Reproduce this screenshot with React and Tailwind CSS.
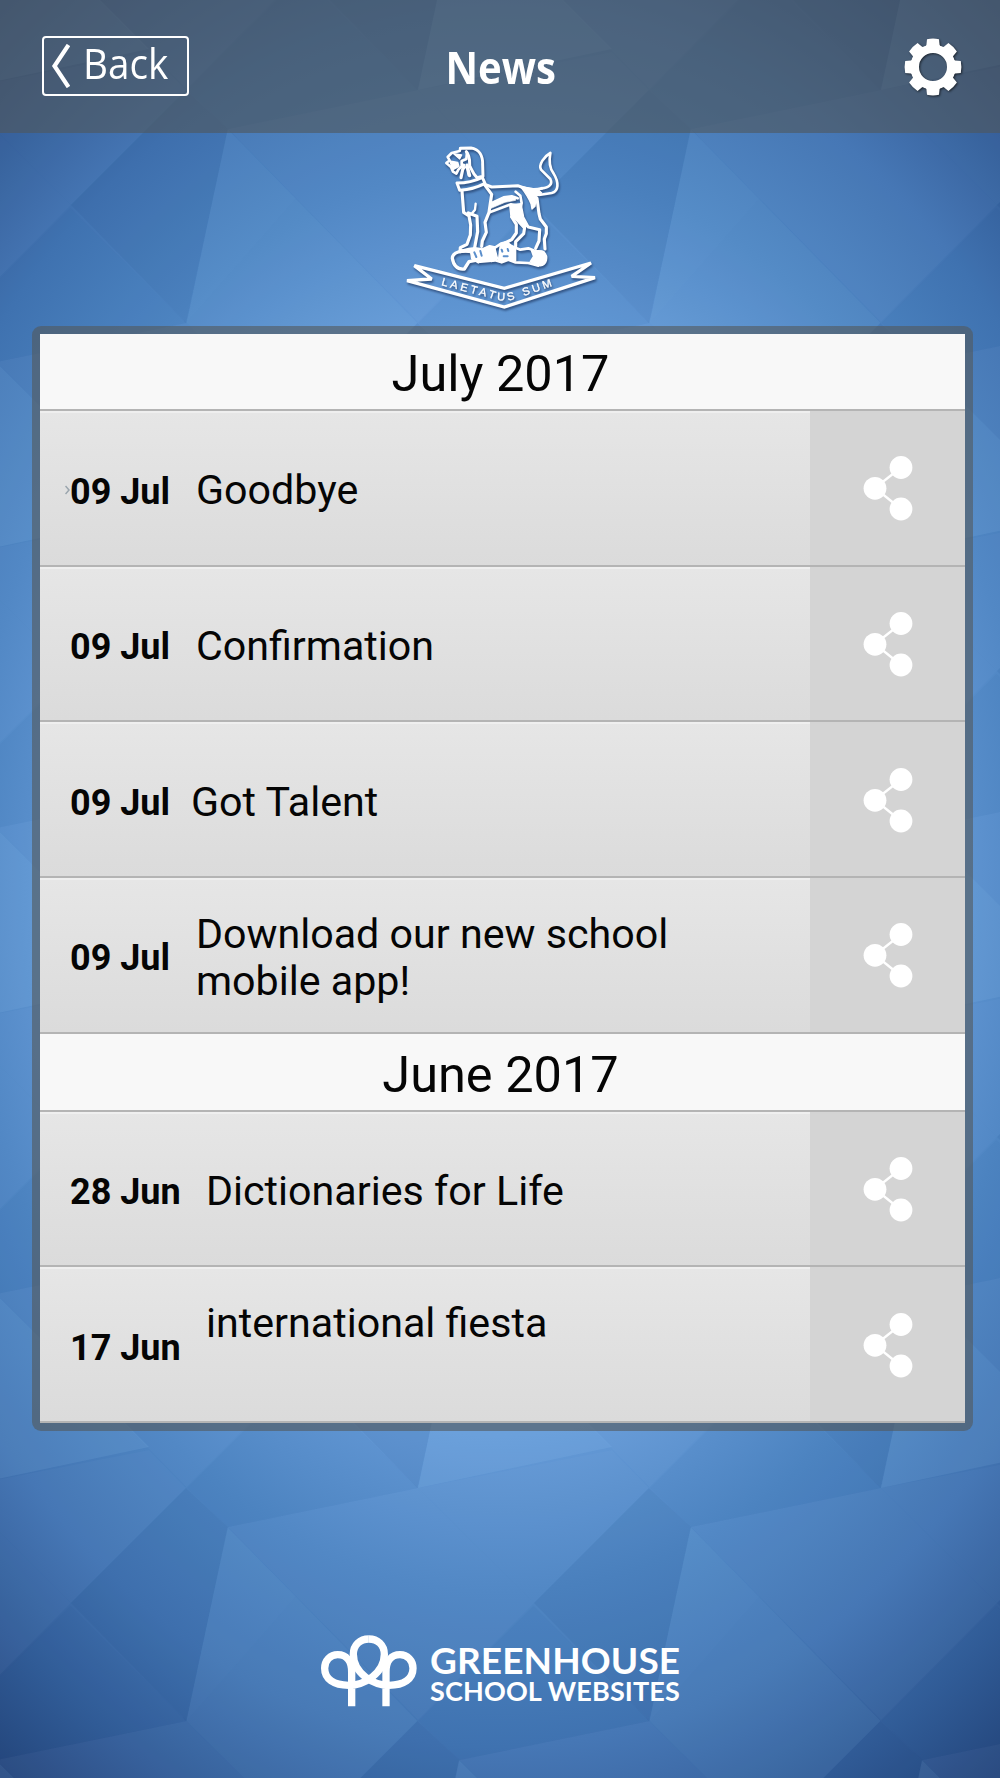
const months = [
  {
    name: 'July 2017',
    items: [
      { date: '09 Jul', title: 'Goodbye', marker: true },
      { date: '09 Jul', title: 'Confirmation' },
      { date: '09 Jul', title: 'Got Talent', indent: 'pl-[151px]' },
      { date: '09 Jul', title: 'Download our new school mobile app!' },
    ],
  },
  {
    name: 'June 2017',
    items: [
      { date: '28 Jun', title: 'Dictionaries for Life', indent: 'pl-[166px]' },
      { date: '17 Jun', title: 'international fiesta', indent: 'pl-[166px] pb-[47px]' },
    ],
  },
]

const light = '#a8d8ff'
const dark = '#0a3a70'

// facets around one lattice point, repeated over the whole background
const shared = [
  { points: '0,0 -190,39 0,232 116,115', fill: light, opacity: 0.04 },
  { points: '116,115 231,0 273,39 231,233', fill: dark, opacity: 0.07 },
  { points: '0,0 -190,39 -231,0 -116,-115', fill: dark, opacity: 0.03 },
]
const evenFacets = [
  ...shared,
  { points: '0,0 41,-194 194,-41', fill: light, opacity: 0.1 },
  { points: '0,0 194,-38 231,0 116,115', fill: light, opacity: 0.04 },
]
const oddFacets = [
  ...shared,
  { points: '0,0 41,-194 231,0 116,115', fill: light, opacity: 0.06 },
  { points: '0,0 41,-194 110,-125', fill: light, opacity: 0.02 },
]

const lattice = []
for (let row = -7; row <= 2; row++) {
  for (let col = -2; col <= 2; col++) {
    const odd = row % 2 !== 0
    lattice.push({ x: 418 + col * 463 + (odd ? 231.5 : 0), y: 1488 + row * 233, facets: odd ? oddFacets : evenFacets })
  }
}

function Background() {
  return (
    <svg className="absolute inset-0 w-full h-full" viewBox="0 0 1000 1778" preserveAspectRatio="none">
      <defs>
        <radialGradient
          id="glow"
          gradientUnits="userSpaceOnUse"
          cx="0"
          cy="0"
          r="1112"
          gradientTransform="translate(500 880) scale(0.75 1)"
        >
          <stop offset="0" stopColor="#70a9e4" />
          <stop offset="0.5" stopColor="#659ad7" />
          <stop offset="0.64" stopColor="#4f86c3" />
          <stop offset="0.78" stopColor="#4274b2" />
          <stop offset="0.9" stopColor="#325c97" />
          <stop offset="1" stopColor="#26477d" />
        </radialGradient>
      </defs>
      <rect width="1000" height="1778" fill="url(#glow)" />
      {lattice.map(({ x, y, facets }) => (
        <g key={`${x},${y}`} transform={`translate(${x} ${y})`}>
          {facets.map((f) => (
            <polygon key={f.points} points={f.points} fill={f.fill} opacity={f.opacity} />
          ))}
        </g>
      ))}
    </svg>
  )
}

function GearIcon() {
  return (
    <svg className="w-[58px] h-[58px] drop-shadow-[1px_1px_1px_rgba(0,0,0,0.6)]" viewBox="-29 -29 58 58">
      <circle r="18.3" fill="none" stroke="#fff" strokeWidth="8.6" />
      {[0, 45, 90, 135, 180, 225, 270, 315].map((a) => (
        <path key={a} d="M-8 -19.5 L-6.6 -22 L-6 -27.8 Q0 -29 6 -27.8 L6.6 -22 L8 -19.5Z" fill="#fff" transform={`rotate(${a})`} />
      ))}
    </svg>
  )
}

function ShareIcon() {
  return (
    <svg className="w-[52px] h-[66px] mt-[1px]" viewBox="0 0 52 66" fill="#fff" stroke="#fff">
      <path d="M39 12.5 L13 33 L39 54" fill="none" strokeWidth="2.4" />
      <circle cx="39" cy="12.5" r="11.4" stroke="none" />
      <circle cx="13" cy="33.3" r="11.4" stroke="none" />
      <circle cx="39" cy="54" r="11.4" stroke="none" />
    </svg>
  )
}

function Crest() {
  return (
    <svg
      className="w-[210px] h-[180px] drop-shadow-[1px_2px_1px_rgba(20,40,80,0.6)]"
      viewBox="0 0 630 540"
      fill="none"
      stroke="#fff"
      strokeWidth="9.5"
      strokeLinejoin="round"
      strokeLinecap="round"
    >
      {/* head */}
      <path d="M196 40 L228 39 C252 42 264 62 263 90 L264 124 L246 128 C234 116 230 104 224 92 C224 78 226 64 214 50" strokeWidth="9" />
      <path d="M196 40 L194 48 L170 54 L158 66 L164 76 L154 84 L168 96 L174 110 L184 116 L190 104 L200 94 L200 78 L214 72 L216 52" strokeWidth="8" />
      <path d="M164 78 L188 82 L192 94 L174 104 Z M176 56 L200 60 L194 72Z" fill="#fff" strokeWidth="4" />
      <path d="M206 90 L198 128 M216 90 L224 122" />
      <path d="M204 104 L214 94 L220 122" strokeWidth="5" />
      {/* collar */}
      <path d="M186 144 C214 144 240 138 262 127 L270 145 C246 158 218 164 194 166 Z" strokeWidth="9" />
      {/* chest and front legs */}
      <path d="M201 168 L206 232 L222 243 L227 270 L226 300 L216 328 L196 338 L195 350 L238 343 L248 290 L246 244 L220 234" />
      <path d="M242 206 L240 224 L230 236" strokeWidth="7" />
      <path d="M268 148 L290 178 L282 232 L270 262 L274 292 L262 318 L260 334" />
      {/* back, belly and flank */}
      <path d="M270 148 L290 156 L368 152 C396 164 420 166 440 160" strokeWidth="9" />
      <path d="M286 206 L326 187 L350 184 L368 190 M362 170 L376 182 L380 204 L378 214 L348 208 L320 218 L284 232" strokeWidth="8" />
      <path d="M286 204 L326 187 L362 186 L362 196 L330 202 L288 220Z" fill="#fff" strokeWidth="2" />
      <path d="M344 210 L378 206 L386 246 L400 272 L384 278 L362 254 L348 246 Z" fill="#fff" strokeWidth="4" />
      {/* hind legs */}
      <path d="M350 246 L364 268 L364 294 L350 314 L330 324" />
      <path d="M390 270 L386 296 L362 320 L362 334 M400 276 L434 284 L432 318 L422 340" />
      <path d="M376 154 C390 172 400 186 408 206 L411 222 L420 214 L424 184 L440 174 L430 164 Z" fill="#fff" strokeWidth="4" />
      <path d="M426 190 L432 236 L436 252 L454 276 L454 296 L448 312 L450 342" />
      {/* tail */}
      <path d="M440 160 C462 158 474 148 466 132 L438 104 C430 88 448 64 466 54 C462 76 462 98 476 116 C492 142 492 168 470 174 L432 180" strokeWidth="8" />
      {/* wreath */}
      <path d="M230 350 C200 344 172 352 172 370 C176 394 190 404 208 402 L222 380 L254 374" strokeWidth="10" />
      <path d="M196 348 L222 342 L240 340 L262 344 L284 334 L300 338 L318 326 L334 322 L350 334 L376 344 L400 340 L420 348 L440 350 M256 380 L300 376 L320 382 L340 374 L360 382 L400 384 L430 392" strokeWidth="8" />
      <path d="M226 346 L262 342 L284 334 L300 340 L308 372 L290 380 L268 374 L250 384 L230 372Z M316 328 L334 324 L362 342 L362 378 L340 374 L310 378Z" fill="#fff" strokeWidth="4" />
      <path d="M410 348 L446 350 C462 366 454 390 436 392 L406 380 L416 364Z" fill="#fff" strokeWidth="5" />
      <path d="M238 352 L244 366 M256 348 L260 362 M320 344 L322 350 M338 342 L340 348 M326 364 L338 364" stroke="#5b8fcc" strokeWidth="6" />
      {/* ribbon */}
      <path d="M58 392 L328 460 L588 384 L530 424 L600 428 L328 516 L36 437 L110 432 Z" strokeWidth="10" strokeLinejoin="miter" strokeMiterlimit="2" />
      <path id="motto" d="M138 450 L290 490 Q328 504 366 490 L520 437" stroke="none" />
      <text fill="#fff" stroke="#fff" strokeWidth="1" fontFamily="Liberation Sans" fontSize="33" letterSpacing="9">
        <textPath href="#motto">LAETATUS SUM</textPath>
      </text>
    </svg>
  )
}

function TreeLogo() {
  const half = 'M154 288 V185 C154 152 138 133 112 133 C90 133 73 150 73 174 C73 206 100 225 145 225 C190 225 252 190 252 132 C252 104 232 86 205.5 86'
  return (
    <svg className="w-[96px] h-[72px]" viewBox="62 74 288 216" fill="none" stroke="#fff" strokeWidth="22">
      <path d={half} />
      <path d={half} transform="translate(411 0) scale(-1 1)" />
    </svg>
  )
}

function NewsRow({ item }) {
  return (
    <div className="flex h-[155.67px] border-b-2 border-[#b4b4b4]">
      <div className="relative flex items-center w-[770px] pt-[2px] border-t-2 border-[#efefef] bg-linear-to-b from-[#e6e6e6] to-[#dbdbdb]">
        {item.marker && (
          <svg className="absolute left-[25px] top-[72px] w-[5px] h-[10px]" viewBox="0 0 5 10">
            <path d="M0.5 1 L4 5 L0.5 9" fill="none" stroke="#9aa5ad" strokeWidth="1.5" />
          </svg>
        )}
        <span className="absolute left-[30px] top-[54.5px] text-[36px] leading-[48px] font-bold whitespace-nowrap">
          {item.date}
        </span>
        <span className={`${item.indent || 'pl-[156px]'} mt-[2px] w-[650px] text-[41.2px] leading-[47px]`}>
          {item.title}
        </span>
      </div>
      <button className="flex flex-1 items-center justify-center bg-[#d4d4d4]" aria-label="Share">
        <ShareIcon />
      </button>
    </div>
  )
}

export default function App() {
  return (
    <div className="relative w-[1000px] h-[1778px] overflow-hidden font-['Roboto',sans-serif] text-[#050505]">
      <Background />
      <div className="relative flex flex-col h-full">
        <header className="flex items-center justify-between h-[133px] pl-[42px] pr-[38px] bg-[rgba(80,86,90,0.6)] text-white font-['Open_Sans',sans-serif]">
          <button className="flex items-center w-[147px] h-[60px] mb-[2px] pl-[7px] border-2 border-white rounded-sm">
            <svg className="w-[19px] h-[44px]" viewBox="0 0 19 44">
              <path d="M17.5 1 L3.5 22 L17.5 43" fill="none" stroke="#fff" strokeWidth="4.2" />
            </svg>
            <span className="ml-[13px] mb-[5px] text-[42px] leading-none origin-left scale-x-[0.92]">Back</span>
          </button>
          <h1 className="mr-[5px] text-[44px] font-bold leading-none scale-x-[0.91]">News</h1>
          <button className="pl-[87px]" aria-label="Settings">
            <GearIcon />
          </button>
        </header>

        <div className="flex justify-center h-[193px] pt-[2px]">
          <Crest />
        </div>

        <main className="w-[941px] ml-[32px] p-[8px] rounded-[9px] bg-[rgba(84,88,90,0.6)]">
          {months.map((m, i) => (
            <section key={m.name}>
              <h2
                className={`${i === 0 ? 'h-[77px] pt-[3px]' : 'h-[78px] pt-[4px]'} pr-[4px] border-b-2 border-[#b4b4b4] bg-[#f8f8f8] text-center text-[50.5px] leading-[74px]`}
              >
                {m.name}
              </h2>
              {m.items.map((item) => (
                <NewsRow key={item.title} item={item} />
              ))}
            </section>
          ))}
        </main>

        <footer className="flex items-start pl-[321px] pt-[204px] text-white font-['Lato',sans-serif] font-bold">
          <TreeLogo />
          <div className="ml-[13px] mt-[5px] whitespace-nowrap">
            <div className="text-[37px] leading-[40px] tracking-[0.1px]">GREENHOUSE</div>
            <div className="-mt-[2px] text-[27px] leading-[25px] tracking-[0.15px]">SCHOOL WEBSITES</div>
          </div>
        </footer>
      </div>
    </div>
  )
}
